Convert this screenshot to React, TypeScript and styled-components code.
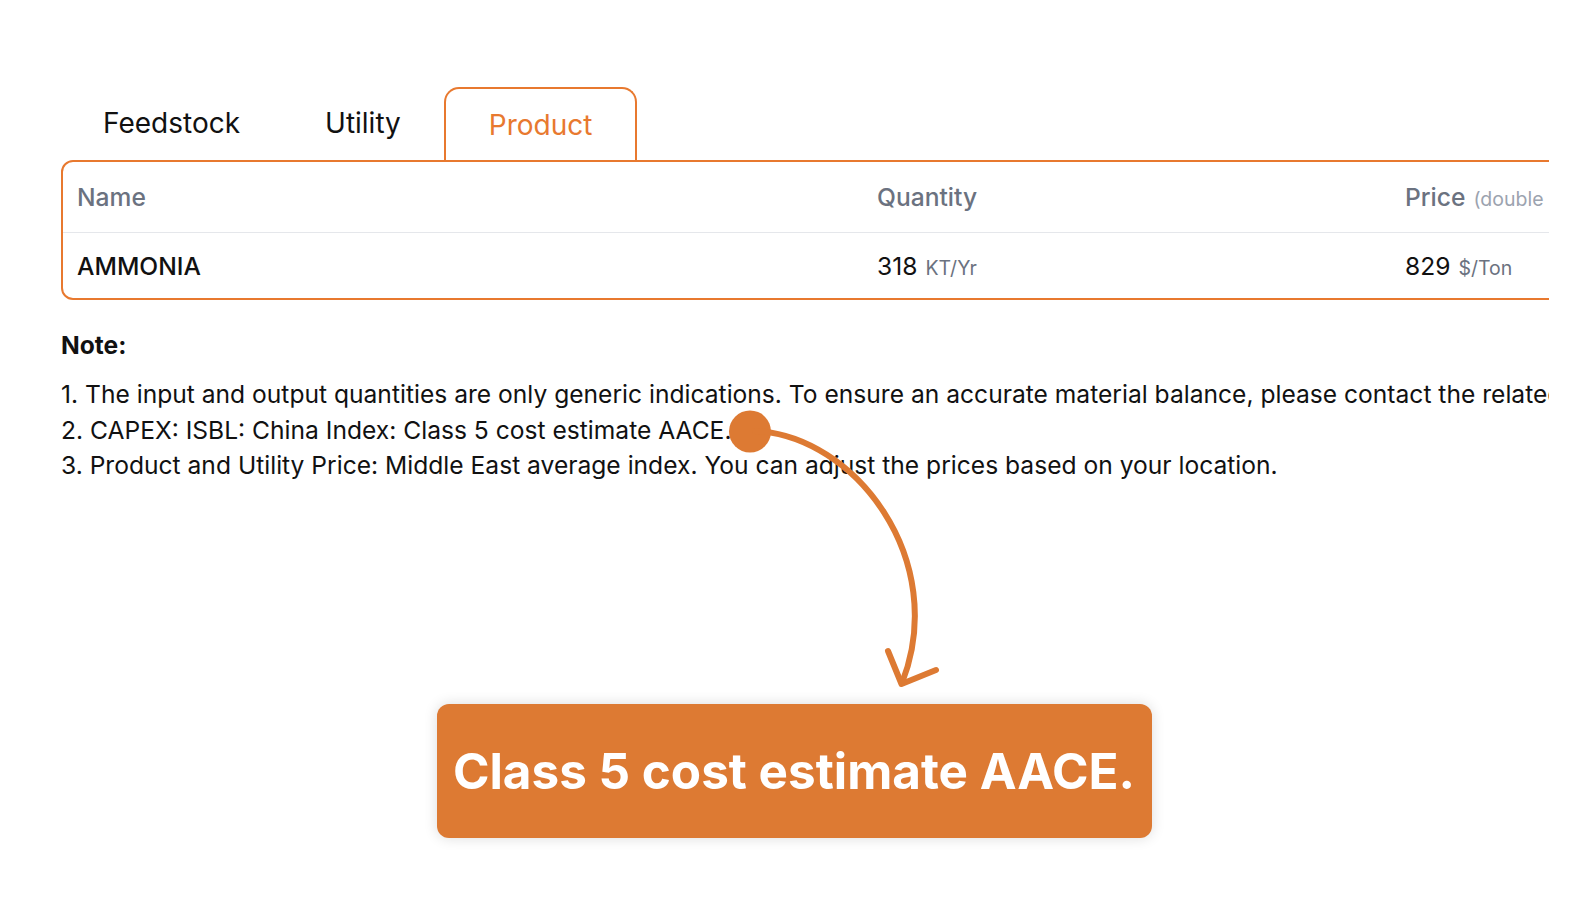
import React from "react";
import styled, { createGlobalStyle } from "styled-components";

const ORANGE = "#E8792F";
const CALLOUT = "#DD7A33";

const Global = createGlobalStyle`
  html, body { margin: 0; padding: 0; background: #fff; }
  body { font-family: Inter, "Noto Sans", "Liberation Sans", sans-serif; color: #111; }
`;

const Page = styled.div`
  position: relative;
  width: 1584px;
  height: 921px;
  overflow: hidden;
  background: #fff;
`;

const Main = styled.div`
  width: 1488px;
  margin-left: 61px;
  padding-top: 87px;
  overflow: hidden;
`;

const TabBar = styled.div`
  display: flex;
  height: 73px;
`;

const Tab = styled.div<{ $active?: boolean }>`
  box-sizing: border-box;
  height: 73px;
  padding: ${(p) => (p.$active ? "1px 43px 0" : "0 41px 3px 40px")};
  display: flex;
  align-items: center;
  font-size: 28px;
  font-weight: 400;
  color: ${(p) => (p.$active ? ORANGE : "#111")};
  border: 2px solid ${(p) => (p.$active ? ORANGE : "transparent")};
  border-bottom: none;
  border-radius: 15px 15px 0 0;
`;

const Table = styled.div`
  width: 1640px;
  border: 2px solid ${ORANGE};
  border-radius: 12px;
`;

const Row = styled.div<{ $head?: boolean }>`
  display: grid;
  grid-template-columns: 800px 528px 1fr;
  align-items: center;
  height: ${(p) => (p.$head ? "70px" : "65px")};
  border-bottom: ${(p) => (p.$head ? "1px solid #E5E7EB" : "none")};
`;

const Cell = styled.div<{ $head?: boolean }>`
  padding-left: 14px;
  font-size: 24.6px;
  font-weight: 500;
  white-space: nowrap;
  color: ${(p) => (p.$head ? "#6B7280" : "#111")};
`;

const Unit = styled.span<{ $light?: boolean }>`
  font-size: 19.5px;
  font-weight: 400;
  margin-left: 8px;
  color: ${(p) => (p.$light ? "#9CA3AF" : "#6B7280")};
`;

const Value = styled.span`
  font-weight: 400;
`;

const Notes = styled.div`
  margin-top: 28px;
  font-size: 24.6px;
  line-height: 35.4px;
  white-space: nowrap;
`;

const NoteTitle = styled.div`
  font-weight: 700;
  margin-bottom: 14px;
`;

const NoteLine = styled.div``;

const CalloutRow = styled.div`
  display: flex;
  justify-content: center;
  padding-left: 4px;
  margin-top: 220px;
`;

const Callout = styled.div`
  width: 715px;
  height: 134px;
  border-radius: 12px;
  background: ${CALLOUT};
  box-shadow: 0 0 14px rgba(0, 0, 0, 0.14);
  display: flex;
  align-items: center;
  justify-content: center;
  color: #fff;
  font-size: 49.4px;
  font-weight: 700;
  white-space: nowrap;
`;

const Overlay = styled.svg`
  position: absolute;
  left: 0;
  top: 0;
  pointer-events: none;
`;

export default function App() {
  return (
    <Page>
      <Global />
      <Main>
        <TabBar>
          <Tab>Feedstock</Tab>
          <Tab>Utility</Tab>
          <Tab $active>Product</Tab>
        </TabBar>
        <Table>
          <Row $head>
            <Cell $head>Name</Cell>
            <Cell $head>Quantity</Cell>
            <Cell $head>
              Price<Unit $light>(double click to edit)</Unit>
            </Cell>
          </Row>
          <Row>
            <Cell>AMMONIA</Cell>
            <Cell>
              <Value>318</Value>
              <Unit>KT/Yr</Unit>
            </Cell>
            <Cell>
              <Value>829</Value>
              <Unit>$/Ton</Unit>
            </Cell>
          </Row>
        </Table>
        <Notes>
          <NoteTitle>Note:</NoteTitle>
          <NoteLine>
            1. The input and output quantities are only generic indications. To ensure an accurate material balance, please contact the related team.
          </NoteLine>
          <NoteLine>2. CAPEX: ISBL: China Index: Class 5 cost estimate AACE.</NoteLine>
          <NoteLine>
            3. Product and Utility Price: Middle East average index. You can adjust the prices based on your location.
          </NoteLine>
        </Notes>
      </Main>
      <CalloutRow>
        <Callout>Class 5 cost estimate AACE.</Callout>
      </CalloutRow>
      <Overlay width="1584" height="921" viewBox="0 0 1584 921">
        <circle cx="750" cy="431.5" r="21" fill={CALLOUT} />
        <path
          d="M 755 431 C 855 435, 950 560, 902 683"
          fill="none"
          stroke={CALLOUT}
          strokeWidth="6"
          strokeLinecap="round"
        />
        <polyline
          points="888,651 901.5,684 936,670"
          fill="none"
          stroke={CALLOUT}
          strokeWidth="6"
          strokeLinecap="round"
          strokeLinejoin="round"
        />
      </Overlay>
    </Page>
  );
}
